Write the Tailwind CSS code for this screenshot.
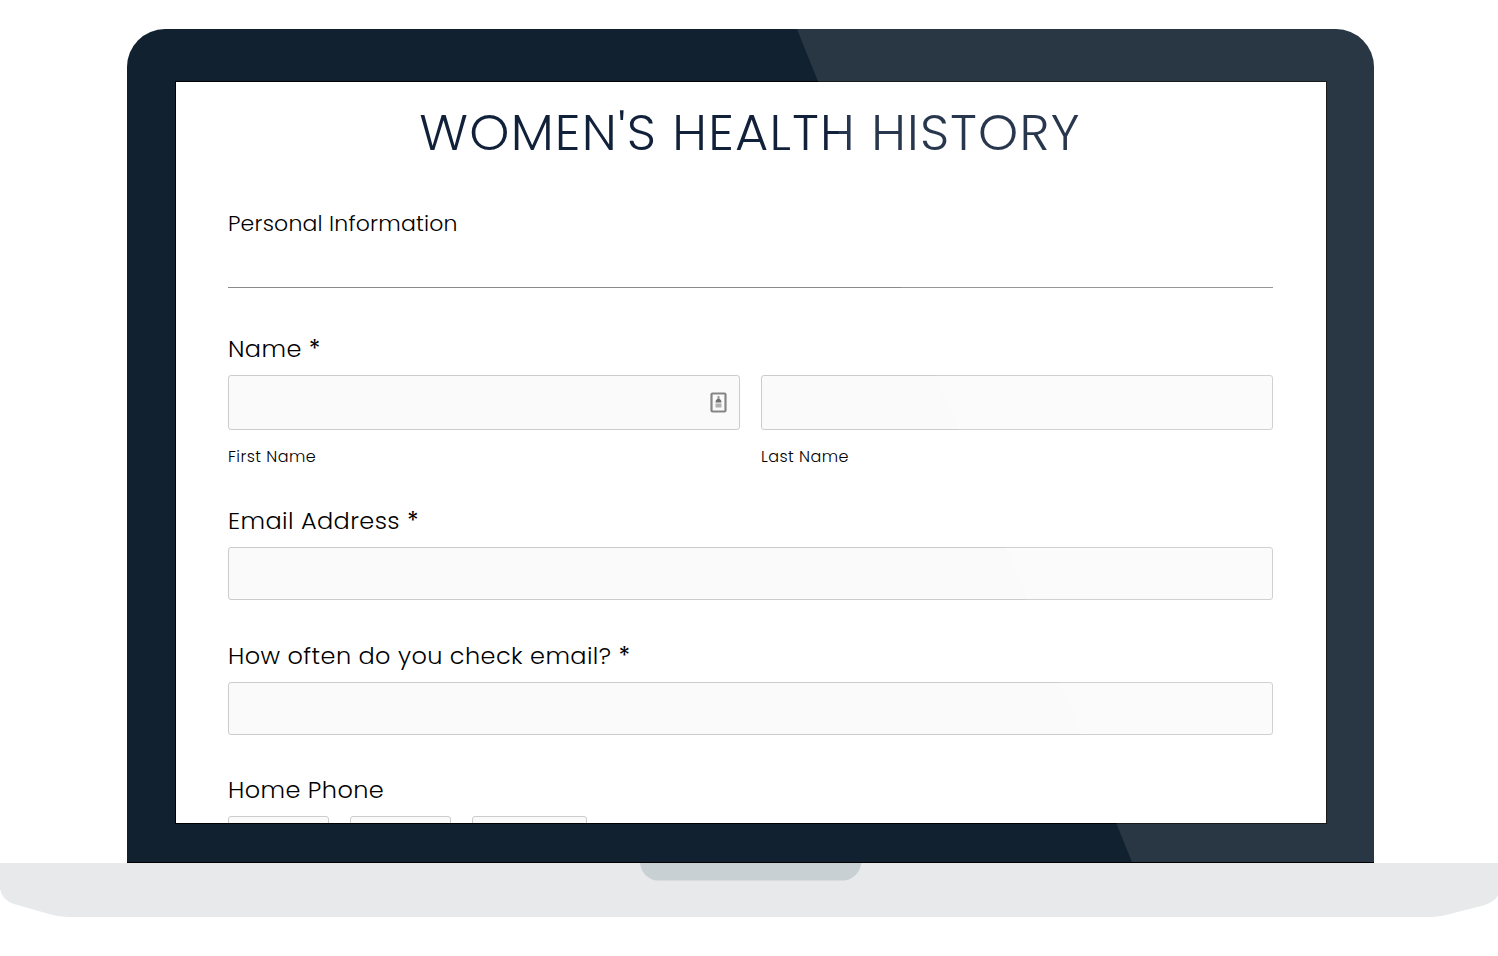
<!DOCTYPE html>
<html lang="en">
<head>
    <meta charset="UTF-8">
    <meta name="viewport" content="width=device-width, initial-scale=1.0">
    <title>Women's Health History</title>
    <script src="https://cdn.jsdelivr.net/npm/@tailwindcss/browser@4"></script>
</head>
<body class="bg-white font-['Poppins','Inter',sans-serif] font-light text-black overflow-hidden">

    <div class="w-[1498px] h-[956px] pt-[29px] flex flex-col overflow-hidden">
        <!-- Lid -->
        <div class="relative ml-[127px] w-[1247px] h-[834px] shrink-0 bg-[#11212f] rounded-t-[38px] border-b border-black px-12 pt-[52px] overflow-hidden">
            <main class="w-[1152px] h-[743px] bg-white border border-black px-[52px] overflow-hidden">
                <h1 class="h-[100px] pt-[17px] pr-[2px] text-center whitespace-nowrap leading-[66px] text-[51px] tracking-[1.24px] text-[#11213a]">WOMEN'S HEALTH HISTORY</h1>

                <h2 class="w-[1045px] h-[106px] pt-[24px] border-b border-[#8a8a8a] text-[22px] leading-[35px] tracking-[0.2px]">Personal Information</h2>

                <form>
                    <div class="mt-[43px] text-2xl leading-9 tracking-[0.4px]">Name <span class="inline-block translate-y-px font-normal">*</span></div>
                    <div class="mt-[8px] flex gap-[21px]">
                        <div>
                            <div class="w-[512px] h-[55px] bg-[#fafafa] border border-[#ccc] rounded-[3px] flex items-center justify-end pr-[12.5px]">
                                <svg class="w-[17px] h-[21px]" viewBox="0 0 17 21" fill="none">
                                    <rect x="1.5" y="1.5" width="14" height="18" rx="1" stroke="#858585" stroke-width="2.2"/>
                                    <path d="M8.5 4v3" stroke="#999" stroke-width="2"/>
                                    <path d="M5.500 10.500c0-5 6-5 6 0z" fill="#707070"/>
                                    <path d="M5.500 13.500h6" stroke="#b0b0b0" stroke-width="4"/>
                                </svg>
                            </div>
                            <div class="mt-[15px] text-base leading-6 tracking-[0.45px]">First Name</div>
                        </div>
                        <div>
                            <div class="w-[512px] h-[55px] bg-[#fafafa] border border-[#ccc] rounded-[3px]"></div>
                            <div class="mt-[15px] text-base leading-6 tracking-[0.45px]">Last Name</div>
                        </div>
                    </div>

                    <div class="mt-[34px] text-2xl leading-9 tracking-[0.42px]">Email Address <span class="inline-block translate-y-px font-normal">*</span></div>
                    <div class="mt-[8px] w-[1045px] h-[53px] bg-[#fafafa] border border-[#ccc] rounded-[3px]"></div>

                    <div class="mt-[38px] text-2xl leading-9 tracking-[0.42px]">How often do you check email? <span class="inline-block translate-y-px font-normal">*</span></div>
                    <div class="mt-[8px] w-[1045px] h-[53px] bg-[#fafafa] border border-[#ccc] rounded-[3px]"></div>

                    <div class="mt-[37px] text-2xl leading-9 tracking-[0.42px]">Home Phone</div>
                    <div class="mt-[8px] flex gap-[21px]">
                        <div class="w-[101px] h-[54px] bg-[#fafafa] border border-[#ccc] rounded-[3px]"></div>
                        <div class="w-[101px] h-[54px] bg-[#fafafa] border border-[#ccc] rounded-[3px]"></div>
                        <div class="w-[115px] h-[54px] bg-[#fafafa] border border-[#ccc] rounded-[3px]"></div>
                    </div>
                </form>
            </main>
            <!-- Sheen -->
            <div class="absolute inset-0 bg-white/10 [clip-path:polygon(670px_0,100%_0,100%_100%,1005px_100%)]"></div>
        </div>

        <!-- Base -->
        <svg class="w-[1498px] h-[54px] shrink-0" viewBox="0 0 1498 54">
            <path d="M0 0H1498V32C1496 37 1490 40 1485 42L1450 51Q1441 54 1432 54H68Q58 54 49 51L14 41Q2 37 0 26Z" fill="#e7e9eb"/>
            <path d="M640 0H861.500C860 10 852 17.500 843 17.500H658C649 17.500 641 10 640 0Z" fill="#c8d0d3"/>
        </svg>
    </div>
</body>
</html>
